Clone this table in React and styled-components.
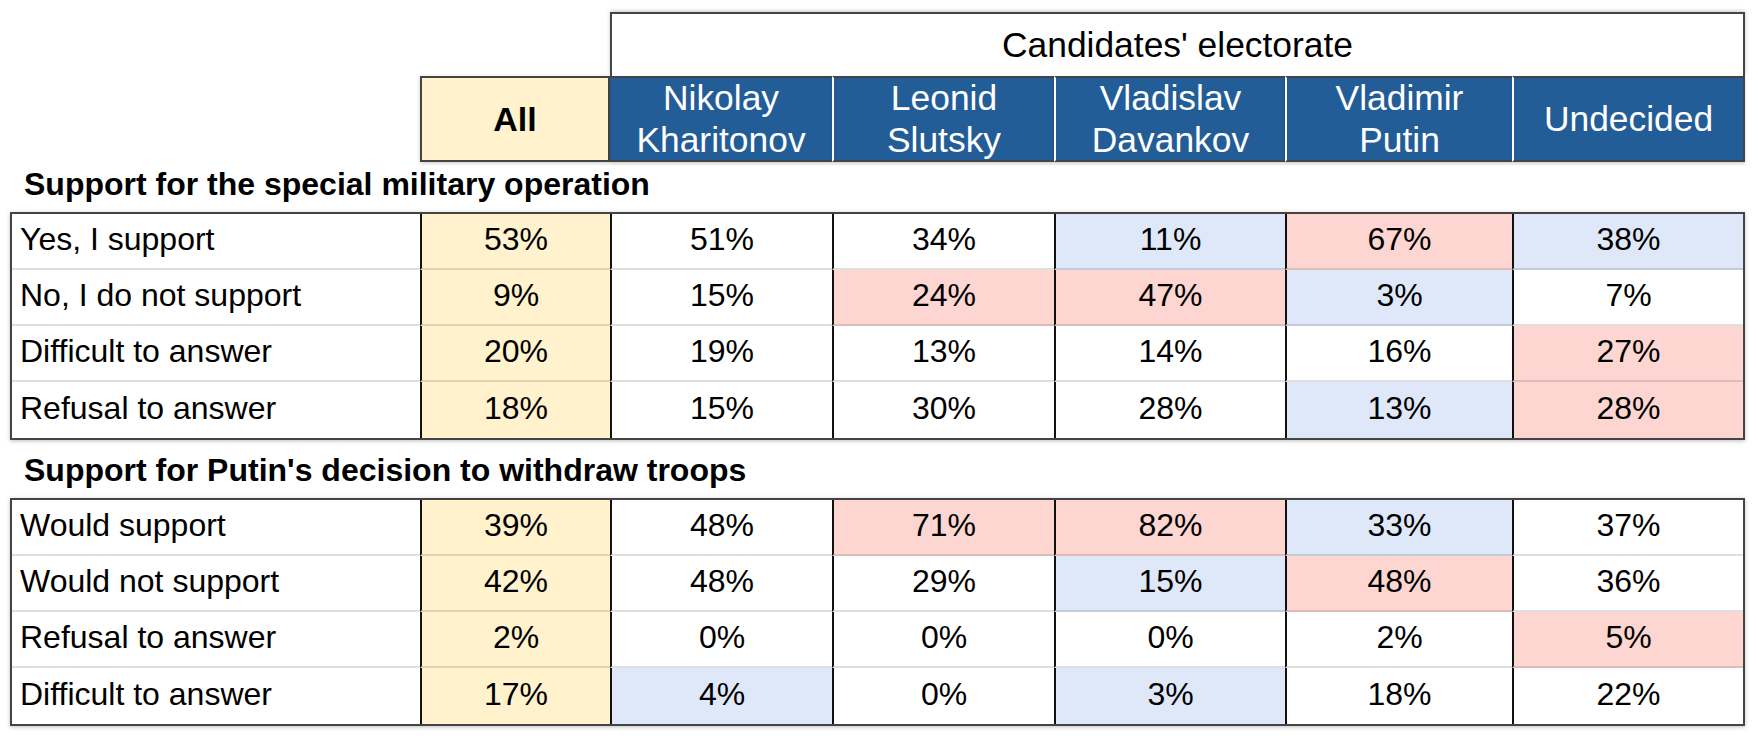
import React from "react";
import styled, { createGlobalStyle, css } from "styled-components";

const GlobalStyle = createGlobalStyle`
  html, body { margin: 0; padding: 0; background: #ffffff; }
  body { font-family: "Liberation Sans", Arial, Helvetica, sans-serif; color: #000; }
  * { box-sizing: border-box; }
`;

const COLORS = {
  y: "#fff2cc",
  b: "#dee8f9",
  r: "#fdd6d1",
  w: "#ffffff",
};

const Page = styled.div`
  width: 1758px;
  height: 736px;
  padding: 12px 0 0 10px;
  overflow: hidden;
`;

const HeaderGrid = styled.div`
  display: grid;
  grid-template-columns: 410px 190px 222px 222px 231px 227px 233px;
  grid-template-rows: 64px 86px;
`;

const ElectorateBox = styled.div`
  grid-column: 3 / 8;
  grid-row: 1;
  border: 2px solid #444;
  border-bottom: none;
  box-shadow: 0 -1px 4px rgba(0, 0, 0, 0.22);
  display: flex;
  align-items: center;
  justify-content: center;
  font-size: 35.4px;
  padding-top: 1px;
`;

const AllHead = styled.div`
  grid-column: 2;
  grid-row: 2;
  background: ${COLORS.y};
  border: 2px solid #444;
  box-shadow: 0 1px 4px rgba(0, 0, 0, 0.22);
  display: flex;
  align-items: center;
  justify-content: center;
  font-weight: bold;
  font-size: 34px;
`;

const NameHead = styled.div`
  grid-row: 2;
  grid-column: ${(p) => p.$col};
  background: #235d98;
  color: #ffffff;
  border-top: 2px solid #444;
  border-bottom: 2px solid #444;
  box-shadow: 0 2px 3px rgba(0, 0, 0, 0.18);
  ${(p) => !p.$first && css`border-left: 2px solid #ffffff;`}
  ${(p) => p.$last && css`border-right: 2px solid #444;`}
  display: flex;
  align-items: center;
  justify-content: center;
  text-align: center;
  font-size: 35.4px;
  line-height: 42px;
`;

const SectionTitle = styled.div`
  height: ${(p) => p.$h}px;
  display: flex;
  align-items: flex-end;
  padding: 0 0 12px 14px;
  font-weight: bold;
  font-size: 32px;
  line-height: 32px;
`;

const DataTable = styled.div`
  width: 1735px;
  border: 2px solid #444;
  box-shadow: 0 1px 4px rgba(0, 0, 0, 0.25);
  display: grid;
  grid-template-columns: 408px 190px 222px 222px 231px 227px 231px;
  grid-auto-rows: 56px;
`;

const Cell = styled.div`
  background: ${(p) => COLORS[p.$tone || "w"]};
  display: flex;
  align-items: center;
  justify-content: center;
  font-size: 32px;
  padding-bottom: 4px;
  ${(p) => p.$divider && css`border-bottom: 2px solid rgba(0, 0, 0, 0.12);`}
  ${(p) => !p.$first && css`border-left: 2px solid #111;`}
`;

const LabelCell = styled(Cell)`
  justify-content: flex-start;
  padding-left: 8px;
`;

const candidates = [
  ["Nikolay", "Kharitonov"],
  ["Leonid", "Slutsky"],
  ["Vladislav", "Davankov"],
  ["Vladimir", "Putin"],
  ["Undecided"],
];

const sections = [
  {
    title: "Support for the special military operation",
    h: 50,
    rows: [
      ["Yes, I support", [["53%", "y"], ["51%"], ["34%"], ["11%", "b"], ["67%", "r"], ["38%", "b"]]],
      ["No, I do not support", [["9%", "y"], ["15%"], ["24%", "r"], ["47%", "r"], ["3%", "b"], ["7%"]]],
      ["Difficult to answer", [["20%", "y"], ["19%"], ["13%"], ["14%"], ["16%"], ["27%", "r"]]],
      ["Refusal to answer", [["18%", "y"], ["15%"], ["30%"], ["28%"], ["13%", "b"], ["28%", "r"]]],
    ],
  },
  {
    title: "Support for Putin's decision to withdraw troops",
    h: 58,
    rows: [
      ["Would support", [["39%", "y"], ["48%"], ["71%", "r"], ["82%", "r"], ["33%", "b"], ["37%"]]],
      ["Would not support", [["42%", "y"], ["48%"], ["29%"], ["15%", "b"], ["48%", "r"], ["36%"]]],
      ["Refusal to answer", [["2%", "y"], ["0%"], ["0%"], ["0%"], ["2%"], ["5%", "r"]]],
      ["Difficult to answer", [["17%", "y"], ["4%", "b"], ["0%"], ["3%", "b"], ["18%"], ["22%"]]],
    ],
  },
];

export default function App() {
  return (
    <>
      <GlobalStyle />
      <Page>
        <HeaderGrid>
          <ElectorateBox>Candidates' electorate</ElectorateBox>
          <AllHead>All</AllHead>
          {candidates.map((c, i) => (
            <NameHead
              key={i}
              $col={i + 3}
              $first={i === 0}
              $last={i === candidates.length - 1}
            >
              <div>
                {c.map((line, j) => (
                  <div key={j}>{line}</div>
                ))}
              </div>
            </NameHead>
          ))}
        </HeaderGrid>
        {sections.map((s, si) => (
          <React.Fragment key={si}>
            <SectionTitle $h={s.h}>{s.title}</SectionTitle>
            <DataTable>
              {s.rows.map(([label, vals], ri) => {
                const divider = ri < s.rows.length - 1;
                return (
                  <React.Fragment key={ri}>
                    <LabelCell $first $divider={divider}>
                      {label}
                    </LabelCell>
                    {vals.map(([v, tone], ci) => (
                      <Cell key={ci} $tone={tone} $divider={divider}>
                        {v}
                      </Cell>
                    ))}
                  </React.Fragment>
                );
              })}
            </DataTable>
          </React.Fragment>
        ))}
      </Page>
    </>
  );
}
